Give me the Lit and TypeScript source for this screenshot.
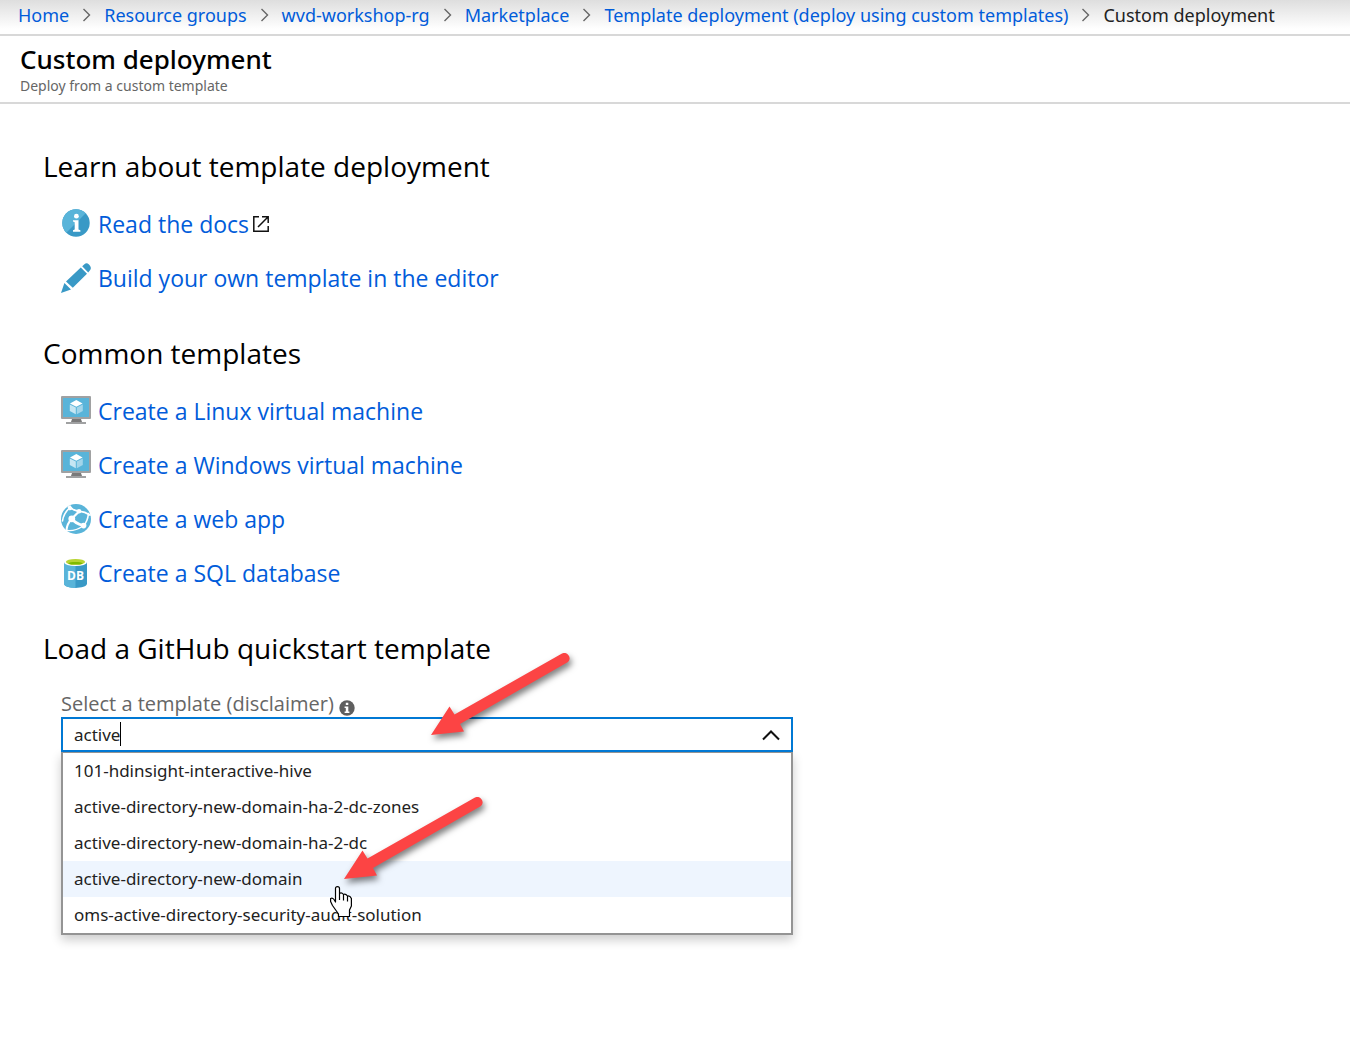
import { LitElement, html, svg, css, TemplateResult } from "lit";
import { customElement, state } from "lit/decorators.js";
import { classMap } from "lit/directives/class-map.js";

const infoIcon = svg`<svg class="icon" viewBox="0 0 30 30" aria-hidden="true">
  <circle cx="15" cy="14" r="13.7" fill="#3999c6"/>
  <path d="M5.3 23.7A13.7 13.7 0 0 1 24.7 4.3Z" fill="#59b4d9"/>
  <circle cx="15.4" cy="7.2" r="2.4" fill="#fff"/>
  <path d="M12 11.2H17.5V20.6L19.4 21.3V22.7H12V21.3L13.7 20.6V13.2L12 12.6Z" fill="#fff"/>
</svg>`;

const pencilIcon = svg`<svg class="icon" viewBox="0 0 30 30" aria-hidden="true">
  <path d="M0 30L3.4 20L10 26.4Z M5 18.4L19.8 4.6L26 10.8L11.8 24.8Z" fill="#3999c6"/>
  <path d="M21.2 3.2L23.4 1.2Q25.6-.8 28 1.4Q31 4.4 29.2 7L27.2 9.4Z" fill="#3999c6"/>
</svg>`;

const vmIcon = svg`<svg class="icon" viewBox="0 0 30 30" aria-hidden="true">
  <rect x="0" y="0" width="30" height="23" rx="1" fill="#a0a1a2"/>
  <rect x="2" y="2" width="26" height="19" fill="#59b4d9"/>
  <path d="M11 23H20L21 26H10Z" fill="#7a7a7a"/>
  <rect x="5" y="26" width="20" height="2" fill="#a0a1a2"/>
  <path d="M15.3 4L21.6 7.4L15.3 10.8L9 7.4Z" fill="#fff"/>
  <path d="M8.8 8.4L14.8 11.6V18.2L8.8 15Z" fill="#c5e6f3"/>
  <path d="M21.8 8.4L15.8 11.6V18.2L21.8 15Z" fill="#a3d5ea"/>
</svg>`;

const webIcon = svg`<svg class="icon" viewBox="0 0 30 30" aria-hidden="true">
  <circle cx="15" cy="15" r="15" fill="#59b4d9"/>
  <g fill="none" stroke="#fff" stroke-linecap="round">
    <path d="M8.5 2.5Q12 6.5 18 7.2T29 11" stroke-width="1.8"/>
    <path d="M18 7.5L11 14.5" stroke-width="2.2"/>
    <path d="M11 14.5Q14 19.5 22 21.5" stroke-width="2.8"/>
    <path d="M10.5 15Q6 20 5.5 26" stroke-width="2"/>
    <path d="M22.5 21.5Q26.5 18 27.5 9.5" stroke-width="1.6"/>
    <path d="M1.5 17Q2.5 9.5 8.5 4" stroke-width="1.6"/>
    <path d="M6 26.5Q14 27.5 22 22" stroke-width="1.4"/>
  </g>
  <g fill="#fff">
    <circle cx="18" cy="7.3" r="2.3"/>
    <circle cx="10.8" cy="14.8" r="3.4"/>
    <circle cx="22.6" cy="21.6" r="2.8"/>
    <path d="M6.2 2.8L9.6 1.2L11.6 5.2L8.6 6.6Z"/>
  </g>
</svg>`;

const sqlIcon = svg`<svg class="icon" viewBox="0 0 30 30" aria-hidden="true">
  <path d="M3 4V25.6C3 31.4 26 31.4 26 25.6V4Z" fill="#3999c6"/>
  <path d="M3 4V25.6C3 28.6 8.6 30 14.5 30V4Z" fill="#59b4d9"/>
  <ellipse cx="14.5" cy="4.2" rx="11.5" ry="3.8" fill="#fff"/>
  <ellipse cx="14.5" cy="3.9" rx="9.6" ry="2.9" fill="#b8d432"/>
  <path d="M7.2 5.4C9 3.6 20 3.6 21.8 5.4C20 7 9 7 7.2 5.4Z" fill="#7fba00"/>
  <text x="14.5" y="22" text-anchor="middle" fill="#fff" font-size="12" font-weight="700">DB</text>
</svg>`;

const externalIcon = svg`<svg class="external" viewBox="0 0 18 18" aria-hidden="true">
  <path d="M7 1.8H1.8V16.2H16.2V11M10 1.8H16.2V8M16.2 1.8L6 12" fill="none" stroke="#111" stroke-width="1.5"/>
</svg>`;

const smallInfoIcon = svg`<svg class="hint" viewBox="0 0 16 16" aria-hidden="true">
  <circle cx="8" cy="8" r="7.7" fill="#5f5f5f"/>
  <path d="M6.8 2.8H9.3V5H6.8Z M5.6 6.4H9.3V11.4H10.4V13H5.6V11.4H6.8V8H5.6Z" fill="#fff"/>
</svg>`;

const separator = svg`<svg class="separator" viewBox="0 0 9 14" aria-hidden="true">
  <path d="M1.5 1L7.5 7L1.5 13" fill="none" stroke="#666" stroke-width="1.4"/>
</svg>`;

interface LinkItem {
  icon: TemplateResult;
  label: string;
  external?: boolean;
}

@customElement("app-root")
export class AppRoot extends LitElement {
  static styles = css`
    :host {
      display: block;
      font-family: "Noto Sans", "Open Sans", sans-serif;
      color: #000;
      background: #fff;
    }
    a {
      color: #015cda;
      text-decoration: none;
    }
    .breadcrumb {
      display: flex;
      align-items: center;
      gap: 13px;
      padding: 0 18px 4px;
      border-bottom: 2px solid #d8d8d8;
      background: linear-gradient(#dedede, #fff 85%);
      font-size: 18px;
      line-height: 30px;
      white-space: nowrap;
      color: #222;
    }
    .separator {
      width: 9px;
      height: 14px;
      flex: none;
    }
    .header {
      padding: 5px 20px 7px;
      border-bottom: 2px solid #d8d8d8;
    }
    .title {
      margin: 0;
      font-size: 26px;
      line-height: 36px;
      font-weight: 500;
    }
    .subtitle {
      margin: 0;
      font-size: 14px;
      line-height: 18px;
      color: #666;
    }
    .content {
      padding: 42px 43px 100px;
    }
    .section + .section {
      margin-top: 28px;
    }
    .heading {
      margin: 0;
      font-family: "Open Sans", "Noto Sans", sans-serif;
      font-size: 28px;
      line-height: 40px;
      font-weight: 400;
    }
    .links {
      list-style: none;
      margin: 11px 0 0;
      padding: 0 18px;
    }
    .row {
      display: flex;
      align-items: center;
      height: 54px;
    }
    .link {
      display: flex;
      align-items: center;
      gap: 7px;
      font-family: "Open Sans", "Noto Sans", sans-serif;
      font-size: 23px;
      line-height: 32px;
      white-space: nowrap;
    }
    .icon {
      width: 30px;
      height: 30px;
      flex: none;
      overflow: visible;
    }
    .external {
      width: 18px;
      height: 18px;
      margin-left: -4px;
    }
    .picker {
      position: relative;
      max-width: 732px;
      margin: 23px 18px 0;
    }
    .label {
      display: flex;
      align-items: center;
      gap: 5px;
      font-family: "Open Sans", "Noto Sans", sans-serif;
      font-size: 20px;
      line-height: 26px;
      color: #666;
    }
    .hint {
      width: 16px;
      height: 16px;
      margin-top: 8px;
    }
    .field {
      position: relative;
      display: flex;
      box-sizing: border-box;
      height: 35px;
      border: 2px solid #0078d4;
      background: #fff;
    }
    .input {
      flex: 1;
      min-width: 0;
      border: 0;
      padding: 0 11px;
      outline: none;
      background: transparent;
      font: inherit;
      font-size: 17px;
      color: #222;
    }
    .caret {
      position: absolute;
      left: 57px;
      top: 3px;
      width: 1px;
      height: 24px;
      background: #000;
    }
    .toggle {
      display: grid;
      place-items: center;
      width: 40px;
      border: 0;
      padding: 0;
      background: transparent;
    }
    .chevron {
      width: 18px;
      height: 12px;
    }
    .options {
      list-style: none;
      margin: 0;
      padding: 0;
      border: 2px solid #949494;
      border-top-width: 1px;
      background: #fff;
      box-shadow: 0 5px 10px rgba(0, 0, 0, 0.2);
    }
    .option {
      padding: 0 11px;
      font-size: 17px;
      line-height: 36px;
      color: #222;
      cursor: pointer;
    }
    .active {
      background: #eef5fe;
    }
    .overlay {
      position: absolute;
      left: 260px;
      top: -49px;
      width: 260px;
      height: 290px;
      overflow: visible;
      pointer-events: none;
    }
    .arrow {
      filter: drop-shadow(2px 4px 3px rgba(0, 0, 0, 0.5));
    }
  `;

  @state() private query = "active";
  @state() private selected = 3;

  private trail = [
    "Home",
    "Resource groups",
    "wvd-workshop-rg",
    "Marketplace",
    "Template deployment (deploy using custom templates)",
  ];

  private learn: LinkItem[] = [
    { icon: infoIcon, label: "Read the docs", external: true },
    { icon: pencilIcon, label: "Build your own template in the editor" },
  ];

  private common: LinkItem[] = [
    { icon: vmIcon, label: "Create a Linux virtual machine" },
    { icon: vmIcon, label: "Create a Windows virtual machine" },
    { icon: webIcon, label: "Create a web app" },
    { icon: sqlIcon, label: "Create a SQL database" },
  ];

  private templates = [
    "101-hdinsight-interactive-hive",
    "active-directory-new-domain-ha-2-dc-zones",
    "active-directory-new-domain-ha-2-dc",
    "active-directory-new-domain",
    "oms-active-directory-security-audit-solution",
  ];

  private renderLinks(items: LinkItem[]) {
    return html`<ul class="links">
      ${items.map(
        (item) => html`<li class="row">
          <a class="link" href="#">${item.icon}<span>${item.label}</span>${item.external ? externalIcon : null}</a>
        </li>`
      )}
    </ul>`;
  }

  private renderOverlay() {
    const arrow = "M0 0L18.5-28.5L23.5-20.5L131-81.5A5.3 5.3 0 0 1 137-73L29-11L33-3.5Z";
    return svg`<svg class="overlay" viewBox="0 0 260 290" aria-hidden="true">
      <g class="arrow" fill="#fc4444">
        <path transform="translate(110 93)" d=${arrow}/>
        <path transform="translate(23 237)" d=${arrow}/>
      </g>
      <path transform="translate(9 244)" fill="#fff" stroke="#000" stroke-width="1.2" stroke-linejoin="round"
        d="M5.5 16V2.5Q5.5.6 7.5.6T9.5 2.5V7.5Q11.5 6 13.5 8.5Q15.5 7.5 17.5 10Q20 9.5 21.4 12.5V20L19.5 24V30.5H8.5V28L2.5 19.5L.6 15.5V12.5Q2.5 11.5 4 13.5ZM9.5 7.5V14M13.5 8.5V14.5M17.5 10V15.5"/>
    </svg>`;
  }

  render() {
    return html`
      <nav class="breadcrumb" aria-label="Breadcrumb">
        ${this.trail.map((name) => html`<a href="#">${name}</a>${separator}`)}
        <span aria-current="page">Custom deployment</span>
      </nav>
      <header class="header">
        <h1 class="title">Custom deployment</h1>
        <p class="subtitle">Deploy from a custom template</p>
      </header>
      <main class="content">
        <section class="section">
          <h2 class="heading">Learn about template deployment</h2>
          ${this.renderLinks(this.learn)}
        </section>
        <section class="section">
          <h2 class="heading">Common templates</h2>
          ${this.renderLinks(this.common)}
        </section>
        <section class="section">
          <h2 class="heading">Load a GitHub quickstart template</h2>
          <div class="picker">
            <label class="label" for="template">Select a template (disclaimer) ${smallInfoIcon}</label>
            <div class="field">
              <input
                class="input"
                id="template"
                type="text"
                role="combobox"
                aria-expanded="true"
                aria-controls="options"
                autocomplete="off"
                .value=${this.query}
                @input=${(e: Event) => (this.query = (e.target as HTMLInputElement).value)}
              />
              <span class="caret"></span>
              <button class="toggle" type="button" aria-label="Close list">
                <svg class="chevron" viewBox="0 0 18 12" aria-hidden="true">
                  <path d="M1 10.5L9 2.5L17 10.5" fill="none" stroke="#111" stroke-width="2" />
                </svg>
              </button>
            </div>
            <ul class="options" id="options" role="listbox" aria-label="Templates">
              ${this.templates.map(
                (name, i) => html`<li
                  class=${classMap({ option: true, active: i === this.selected })}
                  role="option"
                  aria-selected=${i === this.selected}
                  @mouseenter=${() => (this.selected = i)}
                >${name}</li>`
              )}
            </ul>
            ${this.renderOverlay()}
          </div>
        </section>
      </main>
    `;
  }
}
